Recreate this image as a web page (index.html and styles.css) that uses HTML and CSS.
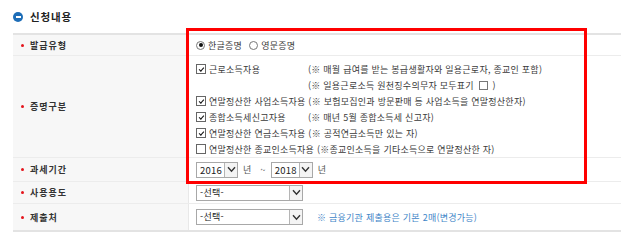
FILE: index.html
```html
<!DOCTYPE html>
<html lang="ko">
<head>
<meta charset="utf-8">
<link rel="stylesheet" href="styles.css">
</head>
<body>
<div class="page">
  <div class="head"><span class="ico"></span><h2>신청내용</h2></div>
  <div class="form">
    <div class="row r1">
      <div class="lbl"><i></i>발급유형</div>
      <div class="val">
        <span class="opt"><span class="radio on"></span>한글증명</span>
        <span class="opt"><span class="radio"></span>영문증명</span>
      </div>
    </div>
    <div class="row r2">
      <div class="lbl"><i></i>증명구분</div>
      <div class="val list">
        <div class="chk"><span class="box on"></span><span class="name">근로소득자용</span><span>(※ 매월 급여를 받는 봉급생활자와 일용근로자, 종교인 포함)</span></div>
        <div class="chk"><span class="blank"></span><span class="name"></span><span>(※ 일용근로소득 원천징수의무자 모두표기 <span class="box small"></span> )</span></div>
        <div class="chk"><span class="box on"></span><span>연말정산한 사업소득자용 (※ 보험모집인과 방문판매 등 사업소득을 연말정산한자)</span></div>
        <div class="chk"><span class="box on"></span><span class="name">종합소득세신고자용</span><span>(※ 매년 5월 종합소득세 신고자)</span></div>
        <div class="chk"><span class="box on"></span><span>연말정산한 연금소득자용 (※ 공적연금소득만 있는 자)</span></div>
        <div class="chk"><span class="box"></span><span>연말정산한 종교인소득자용 (※종교인소득을 기타소득으로 연말정산한 자)</span></div>
      </div>
    </div>
    <div class="row r3">
      <div class="lbl"><i></i>과세기간</div>
      <div class="val">
        <span class="sel yr"><span class="txt">2016</span><b><svg viewBox="0 0 10 8" width="9" height="7"><path d="M1 1.5 L5 6 L9 1.5" fill="none" stroke="#333" stroke-width="1.6"/></svg></b></span>
        <span class="unit">년</span>
        <span class="tilde">~</span>
        <span class="sel yr"><span class="txt">2018</span><b><svg viewBox="0 0 10 8" width="9" height="7"><path d="M1 1.5 L5 6 L9 1.5" fill="none" stroke="#333" stroke-width="1.6"/></svg></b></span>
        <span class="unit">년</span>
      </div>
    </div>
    <div class="row r4">
      <div class="lbl"><i></i>사용용도</div>
      <div class="val">
        <span class="sel wide"><span class="txt">-선택-</span><b><svg viewBox="0 0 10 8" width="9" height="7"><path d="M1 1.5 L5 6 L9 1.5" fill="none" stroke="#333" stroke-width="1.6"/></svg></b></span>
      </div>
    </div>
    <div class="row r5">
      <div class="lbl"><i></i>제출처</div>
      <div class="val">
        <span class="sel wide"><span class="txt">-선택-</span><b><svg viewBox="0 0 10 8" width="9" height="7"><path d="M1 1.5 L5 6 L9 1.5" fill="none" stroke="#333" stroke-width="1.6"/></svg></b></span>
        <span class="note">※ 금융기관 제출용은 기본 2매(변경가능)</span>
      </div>
    </div>
  </div>
  <div class="mark"></div>
</div>
</body>
</html>
```
FILE: styles.css
```css
body {
  margin: 0;
  background: #fff;
  font-family: "Noto Sans CJK KR", "Noto Sans", sans-serif;
  color: #333;
}
.page {
  position: relative;
  width: 608px;
  padding-left: 13px;
}
.head {
  height: 33px;
  display: flex;
  align-items: center;
  gap: 7px;
}
.ico {
  width: 10px;
  height: 10px;
  border-radius: 50%;
  background: #1d6db7;
  display: flex;
  align-items: center;
  justify-content: center;
}
.ico::after {
  content: "";
  width: 5px;
  height: 2px;
  background: #fff;
}
.head h2 {
  margin: 0;
  font-size: 10.5px;
  font-weight: bold;
  color: #222;
  letter-spacing: 0.8px;
}
.form {
  border-top: 2px solid #e3e3e3;
  border-bottom: 2px solid #e3e3e3;
}
.row {
  display: grid;
  grid-template-columns: 176px 1fr;
  border-bottom: 1px solid #ececec;
}
.row:last-child {
  border-bottom: 0;
}
.r1 { height: 20px; }
.r2 { height: 101px; }
.r3 { height: 23px; }
.r4 { height: 21px; }
.r5 { height: 26px; }
.lbl {
  background: #f7f7f7;
  display: flex;
  align-items: center;
  padding-left: 8px;
  font-size: 9px;
  font-weight: bold;
  color: #333;
  letter-spacing: 1px;
  border-right: 1px solid #e8e8e8;
}
.lbl i {
  width: 3px;
  height: 3px;
  border-radius: 50%;
  background: #e4141b;
  margin-right: 6px;
}
.val {
  padding-left: 7px;
  display: flex;
  align-items: center;
  font-size: 9px;
  color: #3a3a3a;
  white-space: nowrap;
  letter-spacing: 0.25px;
}
.opt {
  display: flex;
  align-items: center;
  margin-right: 7px;
}
.radio {
  width: 7px;
  height: 7px;
  border: 1px solid #777;
  border-radius: 50%;
  margin-right: 3px;
  display: flex;
  align-items: center;
  justify-content: center;
  background: #fff;
}
.radio.on::after {
  content: "";
  width: 4px;
  height: 4px;
  border-radius: 50%;
  background: #111;
}
.list {
  flex-direction: column;
  align-items: flex-start;
  justify-content: flex-start;
  padding-top: 5px;
}
.chk {
  display: flex;
  align-items: center;
  height: 16px;
}
.chk .name {
  width: 99px;
}
.box, .blank {
  width: 8px;
  height: 8px;
  border: 1px solid #666;
  background: #fff;
  margin-right: 3px;
  display: inline-flex;
  align-items: center;
  justify-content: center;
  flex: none;
}
.blank {
  border-color: transparent;
  background: transparent;
}
.box.on::after {
  content: "";
  width: 4px;
  height: 2px;
  border-left: 1.6px solid #111;
  border-bottom: 1.6px solid #111;
  transform: rotate(-48deg) translate(0.5px, -0.5px);
}
.box.small {
  width: 7px;
  height: 7px;
  margin: 0 2px 0 2px;
  vertical-align: -1px;
  border-color: #777;
}
.sel {
  display: flex;
  height: 14px;
  border: 1px solid #a8a8a8;
  background: #fff;
  box-sizing: content-box;
}
.sel .txt {
  flex: 1;
  padding-left: 3px;
  font-size: 9px;
  line-height: 14px;
  color: #222;
}
.yr .txt {
  font-size: 9.5px;
}
.sel b {
  width: 12px;
  border-left: 1px solid #b5b5b5;
  background: #f4f4f4;
  display: flex;
  align-items: center;
  justify-content: center;
}
.yr { width: 40px; }
.wide { width: 105px; }
.unit { margin-left: 5px; color: #555; }
.tilde { margin: 0 5px 0 9px; color: #555; }
.note {
  margin-left: 14px;
  color: #3f86c8;
}
.mark {
  position: absolute;
  left: 186px;
  top: 28px;
  width: 395px;
  height: 150px;
  border: 3px solid #f00;
  pointer-events: none;
}
```
